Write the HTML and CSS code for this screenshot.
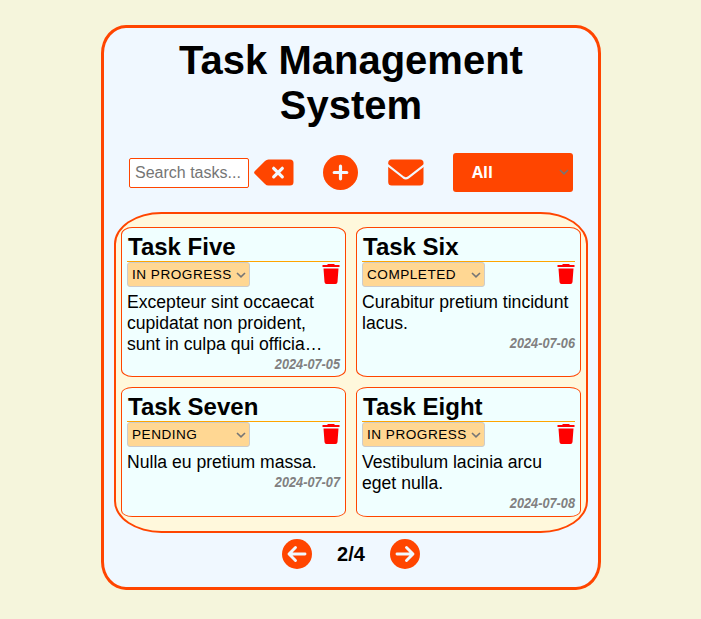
FILE: index.html
```html
<!DOCTYPE html>
<html lang="en">
<head>
<meta charset="utf-8">
<title>Task Management System</title>
<link rel="stylesheet" href="styles.css">
</head>
<body>
<main class="app">
  <h1 class="heading"><span>Task Management</span><br><span>System</span></h1>
  <div class="toolbar">
    <input class="search" type="text" placeholder="Search tasks...">
    <svg class="icon clear" viewBox="0 0 40 27"><path d="M14.500.500H36q3.500 0 3.500 3.500v19q0 3.500-3.500 3.500H14.500q-2 0-3.500-1.500L.700 14.800q-1.200-1.300 0-2.600L11 2q1.500-1.500 3.500-1.500z"/><path class="cross" d="m19.700 9.300 8.600 8.600m0-8.600-8.600 8.600"/></svg>
    <svg class="icon add" viewBox="0 0 35 35"><circle cx="17.500" cy="17.500" r="17.500"/><path class="cross" d="M17.500 11.200v12.600M11.200 17.500h12.600"/></svg>
    <svg class="icon mail" viewBox="0 0 36 27"><rect x=".2" y=".5" width="35.300" height="26" rx="3.500"/><path class="flap" d="M-1 5.500 15.500 18.500Q17.800 20.200 20.200 18.500L37 5.500"/></svg>
    <div class="filter"><span>All</span><svg class="chevron" viewBox="0 0 10 6"><path d="M1 1 5 4.800 9 1"/></svg></div>
  </div>
  <section class="tasks">
    <article class="card">
      <h2 class="title">Task Five</h2>
      <div class="row"><div class="status"><span>IN PROGRESS</span><svg class="chevron" viewBox="0 0 10 6"><path d="M1 1 5 4.800 9 1"/></svg></div><svg class="trash" viewBox="0 0 18 20"><path d="M6 0h6l1 1h4.500v2H.500V1H5zM1.500 4.500h15L15.500 18q-.2 2-2 2h-9q-1.800 0-2-2z"/></svg></div>
      <p class="text">Excepteur sint occaecat<br>cupidatat non proident,<br>sunt in culpa qui officia…</p>
      <time class="date">2024-07-05</time>
    </article>
    <article class="card">
      <h2 class="title">Task Six</h2>
      <div class="row"><div class="status"><span>COMPLETED</span><svg class="chevron" viewBox="0 0 10 6"><path d="M1 1 5 4.800 9 1"/></svg></div><svg class="trash" viewBox="0 0 18 20"><path d="M6 0h6l1 1h4.500v2H.500V1H5zM1.500 4.500h15L15.500 18q-.2 2-2 2h-9q-1.800 0-2-2z"/></svg></div>
      <p class="text">Curabitur pretium tincidunt<br>lacus.</p>
      <time class="date">2024-07-06</time>
    </article>
    <article class="card">
      <h2 class="title">Task Seven</h2>
      <div class="row"><div class="status"><span>PENDING</span><svg class="chevron" viewBox="0 0 10 6"><path d="M1 1 5 4.800 9 1"/></svg></div><svg class="trash" viewBox="0 0 18 20"><path d="M6 0h6l1 1h4.500v2H.500V1H5zM1.500 4.500h15L15.500 18q-.2 2-2 2h-9q-1.800 0-2-2z"/></svg></div>
      <p class="text">Nulla eu pretium massa.</p>
      <time class="date">2024-07-07</time>
    </article>
    <article class="card">
      <h2 class="title">Task Eight</h2>
      <div class="row"><div class="status"><span>IN PROGRESS</span><svg class="chevron" viewBox="0 0 10 6"><path d="M1 1 5 4.800 9 1"/></svg></div><svg class="trash" viewBox="0 0 18 20"><path d="M6 0h6l1 1h4.500v2H.500V1H5zM1.500 4.500h15L15.500 18q-.2 2-2 2h-9q-1.800 0-2-2z"/></svg></div>
      <p class="text">Vestibulum lacinia arcu<br>eget nulla.</p>
      <time class="date">2024-07-08</time>
    </article>
  </section>
  <nav class="pager">
    <svg class="arrow" viewBox="0 0 30 30"><circle cx="15" cy="15" r="15"/><path d="M23 15H7.500M13.500 8.500 7 15l6.500 6.500"/></svg>
    <span class="page">2/4</span>
    <svg class="arrow" viewBox="0 0 30 30"><circle cx="15" cy="15" r="15"/><path d="M7 15h15.500M16.500 8.500 23 15l-6.500 6.500"/></svg>
  </nav>
</main>
</body>
</html>
```
FILE: styles.css
```css
* { box-sizing: border-box; }
body {
  margin: 0;
  padding-top: 25px;
  height: 619px;
  background: beige;
  font-family: "Liberation Sans", Arial, sans-serif;
  color: #000;
}
svg { display: block; flex: none; }
.app {
  width: 500px;
  height: 565px;
  margin: 0 auto 0 101px;
  padding: 10px 10px 0;
  border: 3px solid orangered;
  border-radius: 5%;
  background: aliceblue;
}
.heading {
  margin: 0;
  font-size: 40px;
  line-height: 45px;
  text-align: center;
}
.toolbar {
  display: flex;
  align-items: center;
  height: 40px;
  margin-top: 24px;
  padding-left: 15px;
}
.search {
  width: 120px;
  height: 30px;
  margin-top: 2px;
  padding: 0 5px;
  border: 1px solid orangered;
  border-radius: 2px;
  background: #fff;
  font: 16px "Liberation Sans", Arial, sans-serif;
}
.search::placeholder { color: #757575; }
.icon { fill: orangered; }
.cross { fill: none; stroke: aliceblue; stroke-width: 3.200; stroke-linecap: round; }
.clear { width: 40px; height: 27px; margin-left: 5px; }
.add { width: 35px; height: 35px; margin-left: 29px; }
.mail { width: 36px; height: 27px; margin-left: 30px; }
.flap { fill: none; stroke: aliceblue; stroke-width: 2.2; }
.filter {
  display: flex;
  align-items: center;
  justify-content: space-between;
  width: 120px;
  height: 39px;
  margin-left: 29px;
  padding: 0 4px 0 19px;
  border-radius: 3px;
  background: orangered;
  color: #fff;
  font: bold 16px "Open Sans", sans-serif;
}
.chevron {
  width: 10px;
  height: 6px;
  fill: none;
  stroke: #757575;
  stroke-width: 1.6;
}
.tasks {
  display: grid;
  grid-template-columns: 225px 225px;
  grid-template-rows: 150px 130px;
  gap: 10px;
  width: 474px;
  height: 321px;
  margin-top: 20px;
  padding: 13px 5px;
  border: 2px solid orangered;
  border-radius: 10%;
  background: cornsilk;
}
.card {
  padding: 5px;
  border: 1px solid orangered;
  border-radius: 5%;
  background: azure;
}
.title {
  height: 29px;
  margin: 0;
  padding-left: 1px;
  border-bottom: 1px solid orange;
  font-size: 24px;
  line-height: 27px;
}
.row {
  display: flex;
  justify-content: space-between;
  height: 25px;
}
.status {
  display: flex;
  align-items: center;
  justify-content: space-between;
  width: 123px;
  height: 25px;
  padding: 0 3px 0 4px;
  border: 1px solid #ccc;
  border-radius: 3px;
  background: #ffd793;
  font-size: 13.6px;
  letter-spacing: .5px;
}
.trash { width: 18px; height: 20px; margin-top: 2px; fill: red; }
.text {
  margin: 5px 0 0;
  font-size: 17.6px;
  line-height: 21px;
  white-space: nowrap;
}
.date {
  display: block;
  color: gray;
  font-size: 14.4px;
  font-weight: bold;
  font-style: italic;
  line-height: 18px;
  text-align: right;
  transform: scaleX(.885);
  transform-origin: right;
}
.pager {
  display: flex;
  align-items: center;
  justify-content: center;
  gap: 25px;
  margin-top: 6px;
}
.arrow { width: 30px; height: 30px; fill: orangered; }
.arrow path { fill: none; stroke: aliceblue; stroke-width: 2.900; stroke-linecap: round; stroke-linejoin: round; }
.page { font-size: 20px; font-weight: bold; }
```
